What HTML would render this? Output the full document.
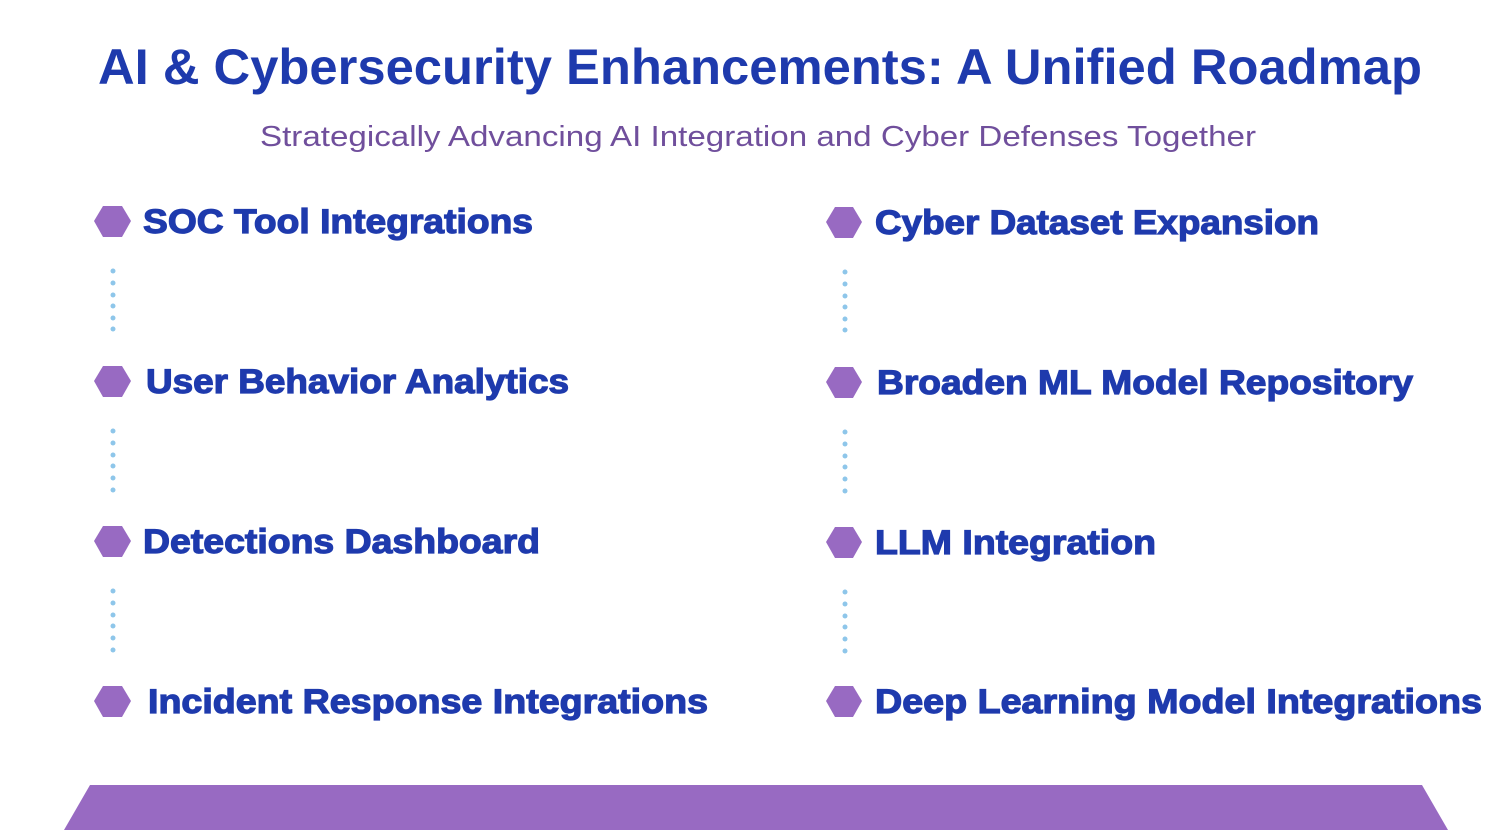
<!DOCTYPE html>
<html><head><meta charset="utf-8"><style>html,body{margin:0;padding:0;background:#fff;overflow:hidden}svg{display:block}</style></head><body>
<svg width="1508" height="830" viewBox="0 0 1508 830" xmlns="http://www.w3.org/2000/svg" font-family="Liberation Sans, sans-serif">
<text x="98" y="84" font-size="50" font-weight="bold" fill="#1E3AAD" textLength="1324" lengthAdjust="spacingAndGlyphs">AI &amp; Cybersecurity Enhancements: A Unified Roadmap</text>
<text x="260" y="146" font-size="29" fill="#704F9C" textLength="996" lengthAdjust="spacingAndGlyphs">Strategically Advancing AI Integration and Cyber Defenses Together</text>
<g fill="#986AC2">
<polygon points="94,221 103,206 122,206 131,221 122,237 103,237"/>
<polygon points="94,381 103,366 122,366 131,381 122,397 103,397"/>
<polygon points="94,541 103,526 122,526 131,541 122,557 103,557"/>
<polygon points="94,701 103,686 122,686 131,701 122,717 103,717"/>
<polygon points="826,222 835,207 853,207 862,222 853,238 835,238"/>
<polygon points="826,382 835,367 853,367 862,382 853,398 835,398"/>
<polygon points="826,542 835,527 853,527 862,542 853,558 835,558"/>
<polygon points="826,701 835,686 853,686 862,701 853,717 835,717"/>
<polygon points="90,785 1422,785 1448,830 64,830"/>
</g>
<g fill="#8EC6EA">
<circle cx="113" cy="271" r="2.5"/><circle cx="113" cy="283" r="2.5"/><circle cx="113" cy="295" r="2.5"/><circle cx="113" cy="306" r="2.5"/><circle cx="113" cy="318" r="2.5"/><circle cx="113" cy="329" r="2.5"/>
<circle cx="113" cy="431" r="2.5"/><circle cx="113" cy="443" r="2.5"/><circle cx="113" cy="455" r="2.5"/><circle cx="113" cy="466" r="2.5"/><circle cx="113" cy="478" r="2.5"/><circle cx="113" cy="490" r="2.5"/>
<circle cx="113" cy="591" r="2.5"/><circle cx="113" cy="603" r="2.5"/><circle cx="113" cy="615" r="2.5"/><circle cx="113" cy="626" r="2.5"/><circle cx="113" cy="638" r="2.5"/><circle cx="113" cy="650" r="2.5"/>
<circle cx="845" cy="272" r="2.5"/><circle cx="845" cy="284" r="2.5"/><circle cx="845" cy="296" r="2.5"/><circle cx="845" cy="307" r="2.5"/><circle cx="845" cy="319" r="2.5"/><circle cx="845" cy="330" r="2.5"/>
<circle cx="845" cy="432" r="2.5"/><circle cx="845" cy="444" r="2.5"/><circle cx="845" cy="456" r="2.5"/><circle cx="845" cy="467" r="2.5"/><circle cx="845" cy="479" r="2.5"/><circle cx="845" cy="491" r="2.5"/>
<circle cx="845" cy="592" r="2.5"/><circle cx="845" cy="604" r="2.5"/><circle cx="845" cy="616" r="2.5"/><circle cx="845" cy="627" r="2.5"/><circle cx="845" cy="639" r="2.5"/><circle cx="845" cy="651" r="2.5"/>
</g>
<g font-size="34" font-weight="bold" fill="#1E3AAD" stroke="#1E3AAD" stroke-width="1.2">
<text x="143" y="233" textLength="390" lengthAdjust="spacingAndGlyphs">SOC Tool Integrations</text>
<text x="146" y="393" textLength="423" lengthAdjust="spacingAndGlyphs">User Behavior Analytics</text>
<text x="143" y="553" textLength="397" lengthAdjust="spacingAndGlyphs">Detections Dashboard</text>
<text x="148" y="713" textLength="560" lengthAdjust="spacingAndGlyphs">Incident Response Integrations</text>
<text x="875" y="234" textLength="444" lengthAdjust="spacingAndGlyphs">Cyber Dataset Expansion</text>
<text x="877" y="394" textLength="536" lengthAdjust="spacingAndGlyphs">Broaden ML Model Repository</text>
<text x="875" y="554" textLength="281" lengthAdjust="spacingAndGlyphs">LLM Integration</text>
<text x="875" y="713" textLength="607" lengthAdjust="spacingAndGlyphs">Deep Learning Model Integrations</text>
</g>
</svg>
</body></html>
